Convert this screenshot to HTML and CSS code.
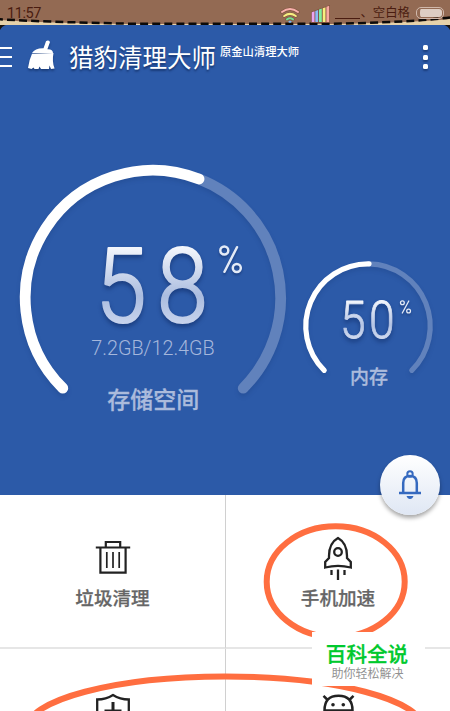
FILE: index.html
```html
<!DOCTYPE html>
<html lang="zh">
<head>
<meta charset="utf-8">
<title>猎豹清理大师</title>
<link rel="stylesheet" href="styles.css">
</head>
<body>
<div class="phone">
  <header class="status">
    <svg class="stitch" width="450" height="32" viewBox="0 0 450 32">
      <path d="M0 20Q45 23 130 24H330Q410 23 450 19V32H0Z" fill="#e6d2aa"/>
      <path d="M0 32V29Q2 25 6 25H444Q448 25 450 29V32Z" fill="#2c5aa8"/>
      <path d="M0 25H6Q2 26 0 30ZM450 25H444Q448 26 450 30Z" fill="#17120f"/>
      <path d="M-5 19Q45 22 130 23.7H330Q410 22.5 450 17.5" fill="none" stroke="#0c0907" stroke-width="2.5" stroke-dasharray="8 4.1"/>
    </svg>
    <span class="time">11:57</span>
    <span class="signals">
      <svg width="20" height="16" viewBox="0 0 20 16" fill="none" stroke-linecap="round">
        <g stroke="#7d4f3d" stroke-width="3.2"><path d="M2 5Q10-.9 18 5M4.2 9Q10 4.6 15.8 9M7 12.3Q10 10.3 13 12.3"/></g>
        <g stroke-width="2.1"><path d="M2 5Q10-.9 18 5" stroke="#f8b1ac"/><path d="M4.2 9Q10 4.6 15.8 9" stroke="#f5ee80"/><path d="M7 12.3Q10 10.3 13 12.3" stroke="#72dc91"/><path d="M9.5 14.8H10.5" stroke="#7db5ec"/></g>
      </svg>
      <svg class="bars" width="19" height="18" viewBox="0 0 19 18">
        <path d="M0 7L19 0V18H0Z" fill="#7d4f3d"/>
        <path d="M.7 7.2L3.5 6.2V17H.7Z" fill="#e9a4f3"/><path d="M4.3 6L7.1 5V17H4.3Z" fill="#8bbaf7"/><path d="M8 4.6L10.8 3.6V17H8Z" fill="#80f0a1"/><path d="M11.7 3.2L14.5 2.2V17H11.7Z" fill="#f6f080"/><path d="M15.4 1.8L18.2 .8V17H15.4Z" fill="#f7aaa1"/>
      </svg>
      <span class="carrier"><i class="blank"></i>、空白格</span>
      <i class="battery"></i>
    </span>
  </header>

  <section class="hero">
    <div class="titlebar">
      <i class="menu"></i>
      <svg class="broom" width="30" height="32" viewBox="0 0 30 32" fill="#fff">
        <path d="M19 1.2Q21.5-.3 23 2L20.4 9.2Q26 9 26 13H5Q8 8 16.5 8.2Z"/>
        <path d="M5 13.7L26.5 13Q24.8 22 27.6 28.5L24 29 22.5 25.5 22 29H14L12.5 26.5 11.5 29H7.5L6.5 27.5 4.5 29 1 28Q2 20 5 13.7Z"/>
      </svg>
      <h1>猎豹清理大师</h1>
      <small>原金山清理大师</small>
      <span class="more"><i></i><i></i><i></i></span>
    </div>
    <svg class="gauges" width="450" height="300" viewBox="0 140 450 300">
      <defs>
        <linearGradient id="big" gradientUnits="userSpaceOnUse" x1="0" y1="-77" x2="0" y2="1"><stop offset="0" stop-color="#f7f9fd"/><stop offset=".65" stop-color="#aabcdf"/><stop offset="1" stop-color="#c7d3ec"/></linearGradient>
        <linearGradient id="mid" gradientUnits="userSpaceOnUse" x1="0" y1="-39" x2="0" y2="1"><stop offset="0" stop-color="#f7f9fd"/><stop offset=".65" stop-color="#b4c4e4"/><stop offset="1" stop-color="#d0daef"/></linearGradient>
      </defs>
      <g class="arc arc-big">
        <path class="track" d="M199 179A127.5 127.5 0 0 1 243.2 388.2"/>
        <path class="value" d="M62.8 388.2A127.5 127.5 0 0 1 199 179"/>
      </g>
      <g class="arc arc-small">
        <path class="track" d="M369 263.8A62.3 62.3 0 0 1 411.8 370.3"/>
        <path class="value" d="M324.2 370.3A62.3 62.3 0 0 1 369 263.8"/>
      </g>
      <g class="num"><text class="num-big" transform="translate(95.5 322) scale(.89 1)" x="0 69" y="0">58</text></g>
      <g class="num"><text class="num-small" transform="translate(340 338) scale(.89 1)" x="0 32.6" y="0">50</text></g>
      <g class="percent">
        <circle cx="224.3" cy="250.5" r="4"/><circle cx="236.8" cy="268" r="4"/><path d="M237 247.2L224.5 271.8"/>
      </g>
      <g class="percent percent-small">
        <circle cx="402.4" cy="302.7" r="1.9"/><circle cx="408.6" cy="311" r="1.9"/><path d="M408.8 301L402.3 313"/>
      </g>
      <text class="detail" x="153" y="354.5">7.2GB/12.4GB</text>
      <text class="label label-big" x="153.3" y="408">存储空间</text>
      <text class="label label-small" x="369" y="384">内存</text>
    </svg>
    <button class="bell" aria-label="提醒">
      <svg width="24" height="30" viewBox="0 0 24 30" fill="none" stroke="#3569bf" stroke-width="2.5">
        <circle cx="12" cy="4" r="2.7" stroke-width="2"/>
        <path d="M5.2 23V13Q5.2 6 12 6T18.8 13V23M1 23H23"/><path d="M8.5 26H15.5Q14.5 29 12 29T8.5 26Z" fill="#3569bf" stroke="none"/>
      </svg>
    </button>
  </section>

  <main class="grid">
    <div class="cell">
      <svg width="36" height="36" viewBox="0 0 36 36" fill="none" stroke="#222" stroke-width="2.2">
        <path d="M.8 8.5H35.2M10.8 8V3H25.2V8M5.4 9V33.6H30.6V9"/><path d="M11.8 13V29M18 13V29M24.2 13V29" stroke-width="1.7"/>
      </svg>
      <span>垃圾清理</span>
    </div>
    <div class="cell">
      <svg class="rocket" width="30" height="44" viewBox="0 0 30 44" fill="none" stroke="#222" stroke-width="2.3">
        <path d="M15 2Q6 7 6 20V22L2.2 26V31.5Q15 28.2 27.8 31.5V26L24 22V20Q24 7 15 2Z"/>
        <circle cx="15" cy="16" r="3.8"/><path d="M8.5 34V39M15 33.5V44M21.5 34V39"/>
      </svg>
      <span>手机加速</span>
    </div>
    <div class="cell cell-cut">
      <svg width="34" height="36" viewBox="0 0 34 36" fill="none" stroke="#222" stroke-width="2.3">
        <path d="M17 2Q10 6.5 1.2 6.5V18Q1.2 29 17 34Q32.8 29 32.8 18V6.5Q24 6.5 17 2Z"/><path d="M17 9V27M8.5 18H25.5" stroke-width="3"/>
      </svg>
    </div>
    <div class="cell cell-cut">
      <svg width="34" height="36" viewBox="0 0 34 36" fill="none" stroke="#222" stroke-width="2.5">
        <path d="M3.5 17.5Q3.5 2.8 17.5 2.8T31.5 17.5ZM6.7 7L2.5 2.8M28.3 7L32.5 2.8"/>
        <circle cx="12" cy="11.8" r="1.8" fill="#222" stroke="none"/><circle cx="22.3" cy="11.8" r="1.8" fill="#222" stroke="none"/>
      </svg>
    </div>
  </main>

  <svg class="marks" width="450" height="216" viewBox="0 495 450 216" fill="none" stroke="#ff6e40" stroke-width="6">
    <ellipse cx="335.7" cy="581.7" rx="69" ry="55.4"/>
    <ellipse cx="225" cy="728.5" rx="198" ry="52"/>
  </svg>
  <aside class="badge"><strong>百科全说</strong><span>助你轻松解决</span></aside>
</div>
</body>
</html>
```
FILE: styles.css
```css
* { box-sizing: border-box; }
body { margin: 0; font-family: Roboto, "Noto Sans CJK SC", sans-serif; }
.phone { position: relative; width: 450px; height: 711px; overflow: hidden; background: #fff; }

.status { position: relative; z-index: 1; height: 25px; display: flex; justify-content: space-between; padding: 0 6px 0 7px; background: #936a53; color: #4a1c10; }
.stitch { position: absolute; left: 0; top: 0; }
.time { position: relative; font-size: 14.5px; line-height: 27px; letter-spacing: -.4px; }
.signals { position: relative; display: flex; align-items: flex-start; }
.signals > svg { margin-top: 7px; margin-left: -2px; }
.signals > .bars { margin: 5px 0 0 11px; }
.carrier { display: flex; align-items: flex-end; margin-left: 5px; height: 21px; font-size: 12.4px; line-height: 16px; white-space: nowrap; }
.blank { width: 25px; height: 1px; margin-bottom: 2px; background: #4a1c10; }
.battery { width: 28px; height: 12px; margin: 7px 0 0 6px; border: 1.5px solid #d0b8ab; border-radius: 5px; background: #ddcdc3; background-clip: content-box; padding: 1px 1px 1px 3px; }

.hero { position: relative; height: 470px; display: flex; flex-direction: column; background: #2c5aa8; color: #fff; }
.titlebar { height: 75px; display: flex; align-items: flex-start; }
.menu { width: 12px; height: 20px; margin-top: 22px; border-top: 2px solid #fff; border-bottom: 2px solid #fff; background: linear-gradient(#fff, #fff) 0 7px / 100% 2px no-repeat; }
.broom { margin: 15px 0 0 15px; filter: drop-shadow(0 2px 1px rgba(0, 20, 60, .4)); }
h1 { margin: 16px 0 0 12px; font-size: 24.5px; line-height: 36px; font-weight: 400; text-shadow: 0 2px 2px rgba(0, 20, 60, .5); white-space: nowrap; }
small { margin: 19px 0 0 4px; font-size: 11.3px; line-height: 18px; font-weight: 500; white-space: nowrap; }
.more { display: flex; flex-direction: column; gap: 4.5px; margin: 20px 22px 0 auto; }
.more i { width: 5px; height: 5px; border-radius: 1.5px; background: #fff; box-shadow: 0 2px 2px rgba(0, 20, 60, .4); }

.gauges { margin-top: 40px; display: block; overflow: visible; }
.arc { fill: none; stroke-linecap: round; filter: drop-shadow(0 3px 2px rgba(0, 20, 70, .13)); }
.arc-big { stroke-width: 10.8px; }
.arc-small { stroke-width: 5.2px; }
.track { stroke: #6182bc; }
.value { stroke: #fff; }
.num { filter: drop-shadow(0 3px 2px rgba(0, 20, 70, .4)); font-weight: 300; stroke-linejoin: round; }
.num-big { font-size: 103px; fill: url(#big); stroke: url(#big); stroke-width: 2.2px; }
.num-small { font-size: 52px; fill: url(#mid); stroke: url(#mid); stroke-width: .8px; }
.percent { fill: none; stroke: #e3eaf6; stroke-width: 2.5px; stroke-linecap: round; filter: drop-shadow(0 2px 1px rgba(0, 20, 70, .35)); }
.percent-small { stroke-width: 1.3px; }
.detail { font-size: 19.8px; font-weight: 300; fill: #a5b7dc; text-anchor: middle; }
.label { font-weight: 500; fill: #abbbdc; stroke: #abbbdc; stroke-width: .3px; text-anchor: middle; }
.label-big { font-size: 23px; }
.label-small { font-size: 19px; }
.bell { position: absolute; right: 10px; bottom: -20px; width: 60px; height: 60px; padding: 0; border: 0; border-radius: 50%; display: flex; align-items: center; justify-content: center; background: linear-gradient(#fff, #dfe7f4); box-shadow: 0 3px 4px rgba(0, 0, 0, .35); z-index: 2; }

.grid { height: 216px; display: grid; grid-template: 154px 62px / 226px 224px; }
.cell { display: flex; flex-direction: column; align-items: center; padding-top: 44px; border-right: 1px solid #d0d0d0; border-bottom: 2px solid #e6e6e6; overflow: hidden; }
.cell svg { flex: none; }
.cell:nth-child(even) { border-right: 0; }
.cell .rocket { margin-top: -3px; margin-bottom: -5px; }
.cell span { margin-top: 10px; font-size: 18.6px; line-height: 28px; font-weight: 500; color: #666; -webkit-text-stroke: .25px #666; }
.cell-cut { border-bottom: 0; }
.marks { position: absolute; left: 0; top: 495px; }
.badge { position: absolute; left: 312px; top: 632px; width: 113px; height: 54px; display: flex; flex-direction: column; align-items: center; background: #fff; }
.badge strong { margin: 10px 3px 0 0; font-size: 20.6px; line-height: 26px; font-weight: 500; color: #00c92e; -webkit-text-stroke: .3px #00c92e; }
.badge span { margin: -1px 2px 0 0; font-size: 12px; line-height: 14px; color: #929292; }
```
